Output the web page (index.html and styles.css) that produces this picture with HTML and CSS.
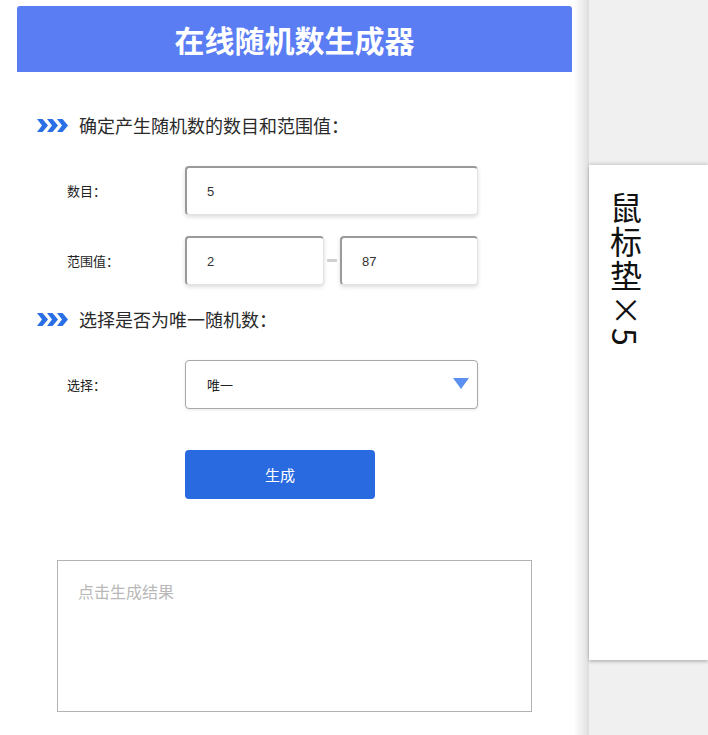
FILE: index.html
```html
<!DOCTYPE html>
<html lang="zh-CN">
<head>
<meta charset="utf-8">
<title>在线随机数生成器</title>
<link rel="stylesheet" href="styles.css">
</head>
<body>
<div class="page">
  <main class="main">
    <header class="banner"><h1>在线随机数生成器</h1></header>

    <div class="section-title">
      <svg class="chevrons" width="31" height="13" viewBox="0 0 31 13">
        <polygon points="0,0 5.5,0 11,6.5 5.5,13 0,13 5,6.5"/>
        <polygon points="10,0 15.5,0 21,6.5 15.5,13 10,13 15,6.5"/>
        <polygon points="20,0 25.5,0 31,6.5 25.5,13 20,13 25,6.5"/>
      </svg>
      <span>确定产生随机数的数目和范围值：</span>
    </div>

    <div class="row row-first">
      <label class="label">数目：</label>
      <input class="field field-wide" type="text" value="5">
    </div>

    <div class="row row-range">
      <label class="label">范围值：</label>
      <div class="range">
        <input class="field field-half" type="text" value="2">
        <span class="dash"></span>
        <input class="field field-half" type="text" value="87">
      </div>
    </div>

    <div class="section-title section-second">
      <svg class="chevrons" width="31" height="13" viewBox="0 0 31 13">
        <polygon points="0,0 5.5,0 11,6.5 5.5,13 0,13 5,6.5"/>
        <polygon points="10,0 15.5,0 21,6.5 15.5,13 10,13 15,6.5"/>
        <polygon points="20,0 25.5,0 31,6.5 25.5,13 20,13 25,6.5"/>
      </svg>
      <span>选择是否为唯一随机数：</span>
    </div>

    <div class="row row-first">
      <label class="label">选择：</label>
      <div class="select-wrap">
        <select class="select">
          <option>唯一</option>
          <option>不唯一</option>
        </select>
        <svg class="caret" width="16" height="11" viewBox="0 0 16 11">
          <polygon points="0,0 16,0 8,11"/>
        </svg>
      </div>
    </div>

    <div class="actions">
      <button class="btn" type="button">生成</button>
    </div>

    <textarea class="result" placeholder="点击生成结果"></textarea>
  </main>

  <div class="shade"></div>

  <aside class="aside">
    <div class="prize">
      <span class="prize-text">鼠标垫×5</span>
    </div>
  </aside>
</div>
</body>
</html>
```

FILE: styles.css
```css
* {
  box-sizing: border-box;
}

html,
body {
  margin: 0;
  padding: 0;
  background: #fff;
}

body {
  font-family: "Noto Sans CJK SC", "Noto Sans", "Liberation Sans", sans-serif;
  color: #222;
}

.page {
  display: flex;
  height: 735px;
  overflow: hidden;
}

/* left column: the generator form */
.main {
  width: 575px;
  flex: none;
  background: #fff;
  display: flex;
  flex-direction: column;
}

.banner {
  margin: 6px 3px 0 17px;
  height: 66px;
  background: #5a7df4;
  border-radius: 3px 3px 0 0;
  display: flex;
  align-items: center;
  justify-content: center;
}

.banner h1 {
  margin: 0;
  font-size: 30px;
  font-weight: 700;
  color: #fff;
  line-height: 1;
  letter-spacing: 0;
}

.section-title {
  display: flex;
  align-items: center;
  height: 24px;
  margin-top: 41px;
  padding-left: 37px;
  font-size: 18px;
  color: #2a2a2a;
}

.section-second {
  margin-top: 22px;
}

.chevrons {
  flex: none;
  fill: #2b6fe6;
  margin-right: 11px;
}

.row {
  display: flex;
  align-items: center;
  height: 49px;
  margin-top: 21px;
}

.row-first {
  margin-top: 29px;
}

.label {
  width: 185px;
  padding-left: 67px;
  font-size: 13px;
  color: #222;
}

.field {
  height: 49px;
  padding: 0 0 0 20px;
  font-family: "Liberation Sans", "Noto Sans CJK SC", sans-serif;
  font-size: 13px;
  color: #333;
  background: #fff;
  border: 1px solid #e2e2e2;
  border-top: 2px solid #9a9a9a;
  border-left: 2px solid #9a9a9a;
  border-radius: 4px;
  box-shadow: 0 2px 4px rgba(0, 0, 0, 0.14);
  outline: none;
}

.field-wide {
  width: 293px;
}

.range {
  display: flex;
  align-items: center;
}

.field-half {
  width: 139px;
}

.field-half + .dash + .field-half {
  width: 138px;
}

.dash {
  width: 10px;
  height: 3px;
  margin: 0 3px;
  background: #cfcfcf;
  border-radius: 1px;
}

.select-wrap {
  position: relative;
  width: 293px;
  height: 49px;
}

.select {
  appearance: none;
  -webkit-appearance: none;
  width: 100%;
  height: 100%;
  padding: 0 0 0 21px;
  font-family: "Noto Sans CJK SC", sans-serif;
  font-size: 13px;
  color: #222;
  background: #fff;
  border: 1px solid #a9a9a9;
  border-radius: 4px;
  box-shadow: 0 1px 3px rgba(0, 0, 0, 0.1);
  outline: none;
}

.caret {
  position: absolute;
  right: 9px;
  top: 18px;
  fill: #5b8ff2;
  pointer-events: none;
}

.actions {
  margin-top: 41px;
  padding-left: 185px;
}

.btn {
  width: 190px;
  height: 49px;
  border: none;
  border-radius: 4px;
  background: #2a6ae0;
  color: #fff;
  font-family: "Noto Sans CJK SC", sans-serif;
  font-size: 15px;
  cursor: pointer;
}

.result {
  display: block;
  margin: 61px 0 0 57px;
  width: 475px;
  height: 152px;
  padding: 18px 20px;
  border: 1px solid #b3b3b3;
  border-radius: 0;
  resize: none;
  font-family: "Noto Sans CJK SC", sans-serif;
  font-size: 16px;
  color: #333;
  outline: none;
}

.result::placeholder {
  color: #b8b8b8;
}

/* soft divider between the columns */
.shade {
  width: 14px;
  flex: none;
  background: linear-gradient(to right, #fbfbfb 0%, #f0f0f0 45%, #dedede 100%);
}

/* right column: prize card */
.aside {
  flex: 1;
  background: #f0f0f0;
  padding-top: 165px;
}

.prize {
  height: 495px;
  background: #fff;
  box-shadow: 0 -2px 3px rgba(0, 0, 0, 0.12), 0 2px 3px rgba(0, 0, 0, 0.22);
  padding: 27px 0 0 21px;
}

.prize-text {
  display: inline-block;
  writing-mode: vertical-rl;
  font-size: 32px;
  line-height: 1;
  letter-spacing: 2px;
  color: #111;
}
```
